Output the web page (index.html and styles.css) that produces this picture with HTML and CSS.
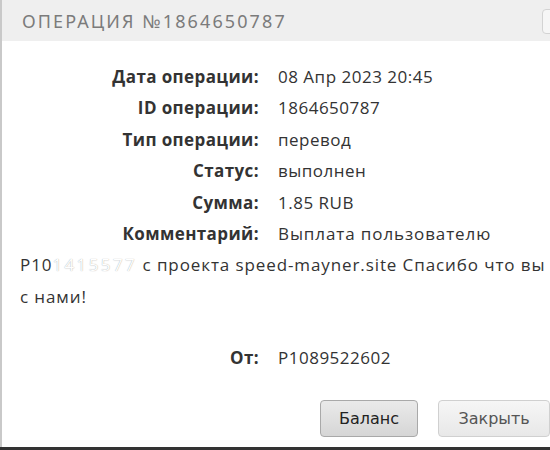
FILE: index.html
```html
<!DOCTYPE html>
<html lang="ru">
<head>
  <meta charset="UTF-8">
  <title>Операция №1864650787</title>
  <link rel="stylesheet" href="styles.css">
</head>
<body>

  <div class="dialog">
    <div class="dialog-header">
      <span class="dialog-title">Операция №1864650787</span>
      <button class="close-btn" title="close">&#10006;</button>
    </div>

    <div class="dialog-body">
      <div class="row"><span class="label">Дата операции:</span>08 Апр 2023 20:45</div>
      <div class="row"><span class="label">ID операции:</span>1864650787</div>
      <div class="row"><span class="label">Тип операции:</span>перевод</div>
      <div class="row"><span class="label">Статус:</span>выполнен</div>
      <div class="row"><span class="label">Сумма:</span>1.85 RUB</div>
      <div class="row row-comment"><span class="label">Комментарий:</span>Выплата пользователю <span class="wallet">P10<span class="masked">1415577</span></span> с проекта speed-mayner.site Спасибо что вы с нами!</div>
      <div class="row row-from"><span class="label">От:</span>P1089522602</div>
    </div>

    <div class="dialog-buttons">
      <button class="btn">Баланс</button>
      <button class="btn btn-light">Закрыть</button>
    </div>
  </div>

</body>
</html>
```

FILE: styles.css
```css
body {
  margin: 0;
  background-color: #333;
  height: 450px;
  overflow: hidden;
}

.dialog {
  width: 580px;
  height: 447px;
  background-color: #fff;
  border-left: 2px solid #c9c9c9;
  box-sizing: border-box;
}

.dialog-header {
  height: 41px;
  background-color: #efefef;
  display: flex;
  align-items: center;
  justify-content: space-between;
  padding: 0 0 0 20px;
}

.dialog-title {
  font-family: 'Noto Sans', sans-serif;
  font-size: 18px;
  text-transform: uppercase;
  letter-spacing: 2.1px;
  color: #7b7b7b;
}

.close-btn {
  width: 26px;
  height: 25px;
  margin-right: 12px;
  margin-top: 1px;
  border: 1px solid #d3d3d3;
  border-radius: 4px;
  background-color: #f6f6f6;
  color: #888;
  font-size: 13px;
  padding: 0;
}

.dialog-body {
  padding: 20px 0 0 18px;
  width: 545px;
  box-sizing: border-box;
  font-family: 'Open Sans', sans-serif;
  font-size: 17px;
  letter-spacing: 0.5px;
  line-height: 31.4px;
  color: #333;
}

.label {
  display: inline-block;
  vertical-align: top;
  width: 239px;
  margin-right: 19px;
  text-align: right;
  font-weight: bold;
  letter-spacing: 0.4px;
}

.row-comment {
  letter-spacing: 0.9px;
}

.row-comment .label {
  letter-spacing: 0.4px;
}

.wallet {
  white-space: nowrap;
}

.masked {
  color: #fff;
  text-shadow: 0 0 1px #999;
  letter-spacing: 2.4px;
}

.row-from {
  margin-top: 30px;
}

.dialog-buttons {
  display: flex;
  gap: 20px;
  padding-left: 318px;
  margin-top: 26px;
}

.btn {
  height: 37px;
  padding: 0 18px;
  font-family: 'DejaVu Sans', sans-serif;
  font-size: 16px;
  color: #222;
  border: 1px solid #a9a9a9;
  border-radius: 4px;
  background: linear-gradient(#eaeaea, #d6d6d6);
  flex-shrink: 0;
}

.btn-light {
  width: 112px;
  color: #555;
  border-color: #d0d0d0;
  background: linear-gradient(#f6f6f6, #e8e8e8);
}
```
